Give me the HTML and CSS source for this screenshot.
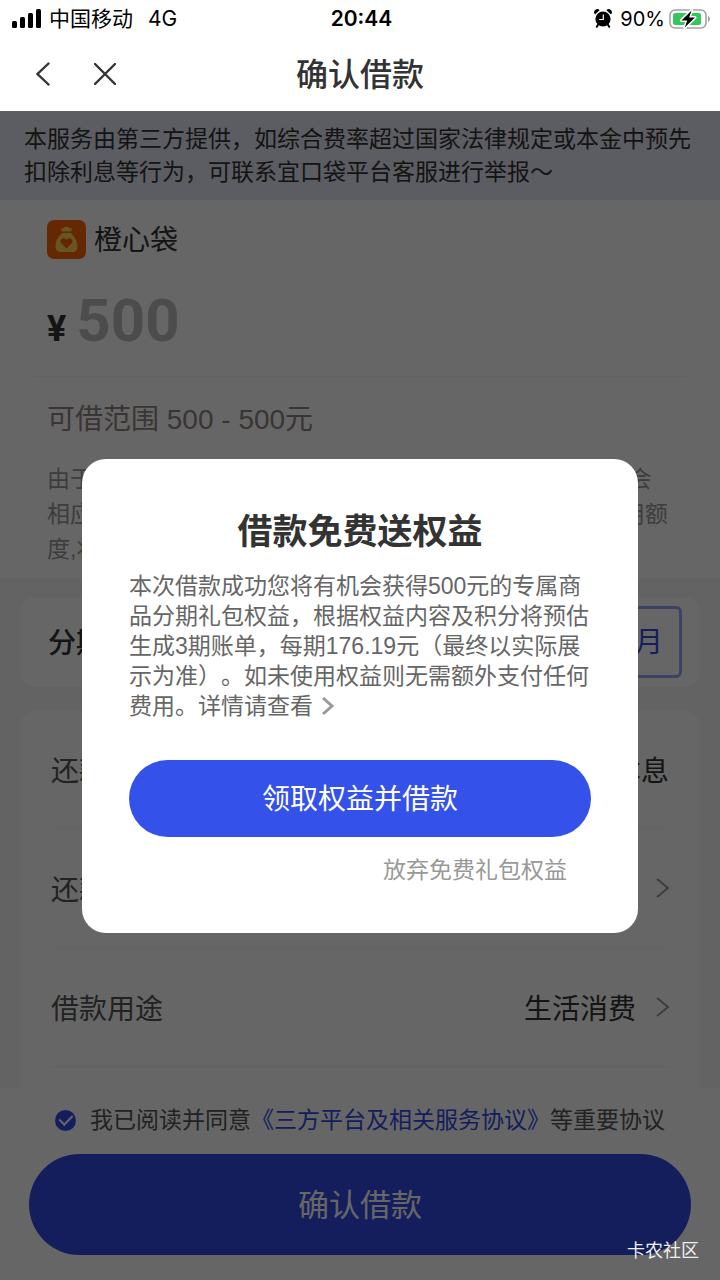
FILE: index.html
```
<!DOCTYPE html>
<html lang="zh-CN">
<head>
    <meta charset="UTF-8">
    <meta name="viewport" content="width=device-width, initial-scale=1.0">
    <title>确认借款</title>
    <link rel="stylesheet" href="styles.css">
</head>
<body>
    <header class="header">
        <div class="status">
            <div class="status-left">
                <svg class="signal" width="30" height="19" viewBox="0 0 30 19">
                    <rect x="0" y="12" width="5" height="7" rx="1.5"/>
                    <rect x="8" y="8" width="5" height="11" rx="1.5"/>
                    <rect x="16" y="4" width="5" height="15" rx="1.5"/>
                    <rect x="24" y="0" width="5" height="19" rx="1.5"/>
                </svg>
                <span>中国移动</span>
                <span class="network">4G</span>
            </div>
            <div class="time">20:44</div>
            <div class="status-right">
                <svg width="18" height="20" viewBox="0 0 18 20">
                    <circle cx="9" cy="10" r="7.6"/>
                    <path d="M1 5.4 A3 3 0 0 1 5.6 1.2 Z M17 5.4 A3 3 0 0 0 12.4 1.2 Z"/>
                    <path d="M4.5 15 L2.8 17.8 M13.5 15 L15.2 17.8" stroke="#000" stroke-width="2" stroke-linecap="round"/>
                    <path d="M9.3 5.5 V10.5 H5.2" fill="none" stroke="#fff" stroke-width="1.2"/>
                </svg>
                <span class="percent">90%</span>
                <svg width="42" height="20" viewBox="0 0 42 20">
                    <rect x="1" y="1" width="36" height="18" rx="5" fill="#fff" stroke="#a0a4a8" stroke-width="1.6"/>
                    <rect x="4" y="4" width="28" height="12" rx="2.5" fill="#35c759"/>
                    <path d="M39 7 C41.6 7.8 41.6 12.2 39 13 Z" fill="#a0a4a8"/>
                    <path d="M22.5 1.5 L12.5 11.4 H18.2 L15.8 18.5 L26 8.6 H20.2 Z" stroke="#fff" stroke-width="3" paint-order="stroke" stroke-linejoin="round"/>
                </svg>
            </div>
        </div>
        <nav class="nav">
            <div class="nav-buttons">
                <button class="icon-button" aria-label="返回">
                    <svg width="14" height="24" viewBox="0 0 14 24"><path d="M12.5 1.5 L1.5 12 L12.5 22.5"/></svg>
                </button>
                <button class="icon-button" aria-label="关闭">
                    <svg width="22" height="22" viewBox="0 0 22 22"><path d="M1 1 L21 21 M21 1 L1 21"/></svg>
                </button>
            </div>
            <h1>确认借款</h1>
        </nav>
    </header>

    <main class="page">
        <p class="notice">本服务由第三方提供，如综合费率超过国家法律规定或本金中预先扣除利息等行为，可联系宜口袋平台客服进行举报～</p>

        <section class="amount">
            <div class="brand">
                <svg width="39" height="39" viewBox="0 0 39 39">
                    <rect width="39" height="39" rx="7" fill="#fe6408"/>
                    <path d="M13.5 7.5 Q16 9.5 17 7.5 Q19.5 6.2 22 7.5 Q23.5 9.3 25.5 7.5 L24 11.5 H15 Z" fill="#ffd65a"/>
                    <path d="M15 13 H24 C26.5 16 30.5 20 30.5 26 C30.5 30 28.5 32 25 32 H14 C10.5 32 8.5 30 8.5 26 C8.5 20 12.5 16 15 13 Z" fill="#ffd65a"/>
                    <path d="M19.5 28.5 L14.3 23.2 C12 20.5 15.5 16 19.5 19.8 C23.5 16 27 20.5 24.7 23.2 Z" fill="#fe5a08"/>
                </svg>
                <span>橙心袋</span>
            </div>
            <div class="money">
                <label for="money">¥</label>
                <input id="money" type="text" value="500">
            </div>
            <p class="range">可借范围 500 - 500元</p>
            <p class="tips">由于每位用户的信用情况有所不同,系统在完成综合审核后会相应调整您的可借范围请您以最终审核通过实际展示的可用额度,将以实际放款为准</p>
        </section>

        <section class="card term">
            <h2>分期期限</h2>
            <button class="month">3个月</button>
        </section>

        <section class="card rows">
            <div class="row">
                <span>还款方式</span>
                <span class="value">等额本息</span>
            </div>
            <button class="row">
                <span>还款计划</span>
                <svg class="arrow" width="13" height="20" viewBox="0 0 13 20"><path d="M1 1 L12 10 L1 19"/></svg>
            </button>
            <button class="row">
                <span>借款用途</span>
                <span class="value">生活消费</span>
                <svg class="arrow" width="13" height="20" viewBox="0 0 13 20"><path d="M1 1 L12 10 L1 19"/></svg>
            </button>
        </section>

        <footer class="footer">
            <div class="agree">
                <input type="checkbox" id="agree" checked>
                <label for="agree">我已阅读并同意<a href="#">《三方平台及相关服务协议》</a>等重要协议</label>
            </div>
            <button class="confirm">确认借款</button>
        </footer>

        <div class="overlay">
            <div class="modal" role="dialog" aria-labelledby="modal-title">
                <h2 id="modal-title">借款免费送权益</h2>
                <p>本次借款成功您将有机会获得500元的专属商品分期礼包权益，根据权益内容及积分将预估生成3期账单，每期176.19元（最终以实际展示为准）。如未使用权益则无需额外支付任何费用。<a class="detail" href="#">详情请查看<svg width="13" height="20" viewBox="0 0 13 20"><path d="M2 2 L11 10 L2 18"/></svg></a></p>
                <button class="get">领取权益并借款</button>
                <a class="skip" href="#">放弃免费礼包权益</a>
            </div>
        </div>
        <div class="watermark">卡农社区</div>
    </main>
</body>
</html>
```

FILE: styles.css
```
* {
    box-sizing: border-box;
    margin: 0;
    padding: 0;
}
body {
    display: flex;
    flex-direction: column;
    min-height: 100vh;
    font-family: "Liberation Sans", "Noto Sans CJK SC", sans-serif;
    font-size: 23px;
    color: #333;
    background: #fff;
    text-spacing-trim: space-all;
}
button {
    border: none;
    background: none;
    font: inherit;
    color: inherit;
    cursor: pointer;
}
a {
    color: inherit;
    text-decoration: none;
}

/* status bar and title */
.status {
    display: grid;
    grid-template-columns: 1fr auto 1fr;
    align-items: center;
    height: 37px;
    padding: 0 9px 0 12px;
    font-family: Inter, "Noto Sans CJK SC", sans-serif;
    font-size: 21px;
    line-height: 36px;
    color: #000;
}
.status-left, .status-right {
    display: flex;
    align-items: center;
}
.status-left {
    gap: 7px;
}
.status-right {
    justify-content: flex-end;
    gap: 4px;
}
.network {
    margin-left: 8px;
}
.percent {
    margin-left: 4px;
    font-size: 20px;
}
.time {
    font-size: 21px;
    font-weight: 600;
}
.nav {
    display: grid;
    grid-template-columns: 1fr auto 1fr;
    align-items: center;
    height: 74px;
    padding: 0 36px;
}
.nav-buttons {
    display: flex;
    align-items: center;
    gap: 44px;
}
.icon-button {
    display: flex;
}
.icon-button path {
    fill: none;
    stroke: #333;
    stroke-width: 2.4;
    stroke-linecap: round;
}
h1 {
    padding-bottom: 4px;
    font-size: 32px;
    font-weight: 500;
}

/* page */
.page {
    position: relative;
    flex: 1;
    display: flex;
    flex-direction: column;
    background: #f8f8f8;
}
.notice {
    padding: 12px 24px 11px;
    line-height: 33px;
    background: #e6e8f6;
}
.amount {
    padding: 20px 47px 12px;
    background: #fff;
}
.brand {
    display: flex;
    align-items: center;
    gap: 8px;
    height: 39px;
    font-size: 28px;
}
.brand span {
    padding-bottom: 4px;
}
.money {
    display: flex;
    align-items: baseline;
    gap: 10px;
    height: 118px;
    margin: 0 -14px;
    padding: 26px 14px 0;
    border-bottom: 1px solid #f4f4f4;
    font-family: Roboto, sans-serif;
    font-weight: 700;
}
.money label {
    font-size: 36px;
}
.money input {
    flex: 1;
    min-width: 0;
    border: none;
    outline: none;
    background: none;
    font: inherit;
    font-size: 60px;
    line-height: 72px;
    color: #bfbfbf;
}
.range {
    margin: 23px 0 22px;
    font-size: 28px;
    line-height: 40px;
    color: #8f8583;
}
.tips {
    line-height: 35px;
    color: #999;
}
.card {
    margin: 0 20px;
    background: #fff;
    border-radius: 16px;
}
.term {
    display: flex;
    align-items: center;
    justify-content: space-between;
    height: 90px;
    margin-top: 18px;
    padding: 0 18px 0 28px;
}
.term h2 {
    padding-bottom: 2px;
    font-size: 28px;
    font-weight: 500;
}
.month {
    height: 72px;
    padding: 0 16px 4px;
    border: 3px solid #96a5fa;
    border-radius: 6px;
    font-size: 28px;
    color: #344de9;
}
.rows {
    flex: 1;
    margin-top: 23px;
    padding: 0 31px 21px;
    border-radius: 16px 16px 0 0;
}
.row {
    display: flex;
    align-items: center;
    width: 100%;
    height: 119px;
    border-bottom: 1px solid #f4f4f4;
    font-size: 28px;
    color: #555;
}
.value {
    margin-left: auto;
    color: #333;
}
.arrow {
    margin-left: auto;
    fill: none;
    stroke: #999;
    stroke-width: 2;
}
.value + .arrow {
    margin-left: 20px;
}
.footer {
    padding: 14px 29px 26px;
    background: #fff;
}
.agree {
    display: flex;
    align-items: center;
    justify-content: center;
    gap: 14px;
    line-height: 36px;
    color: #555;
}
.agree a {
    color: #344de9;
}
.agree input {
    display: grid;
    place-items: center;
    width: 21px;
    height: 21px;
    border-radius: 50%;
    appearance: none;
    background: #344de9;
}
.agree input:checked::after {
    content: "";
    width: 6px;
    height: 11px;
    margin-bottom: 3px;
    border: solid #fff;
    border-width: 0 2px 2px 0;
    transform: rotate(45deg);
}
.confirm, .get {
    width: 100%;
    padding-bottom: 4px;
    border-radius: 60px;
    background: #344de9;
    color: #fff;
}
.confirm {
    display: block;
    height: 101px;
    margin-top: 16px;
    font-size: 31px;
}

/* popup */
.overlay {
    position: absolute;
    inset: 0;
    display: flex;
    align-items: center;
    padding: 0 82px;
    background: rgba(0, 0, 0, 0.6);
}
.modal {
    display: flex;
    flex-direction: column;
    width: 100%;
    padding: 48px 47px 46px;
    border-radius: 24px;
    background: #fff;
}
.modal h2 {
    margin-bottom: 14px;
    font-size: 35px;
    line-height: 50px;
    text-align: center;
}
.modal p {
    line-height: 30px;
    color: #666;
}
.detail svg {
    margin-left: 8px;
    vertical-align: -2px;
    fill: none;
    stroke: #999;
    stroke-width: 3;
}
.get {
    height: 77px;
    margin-top: 39px;
    font-size: 28px;
    background: #3451ea;
}
.skip {
    align-self: flex-end;
    margin: 16px 24px 0 0;
    line-height: 34px;
    color: #999;
}
.watermark {
    position: absolute;
    right: 21px;
    bottom: 19px;
    font-size: 18px;
    color: #eee;
}
```
